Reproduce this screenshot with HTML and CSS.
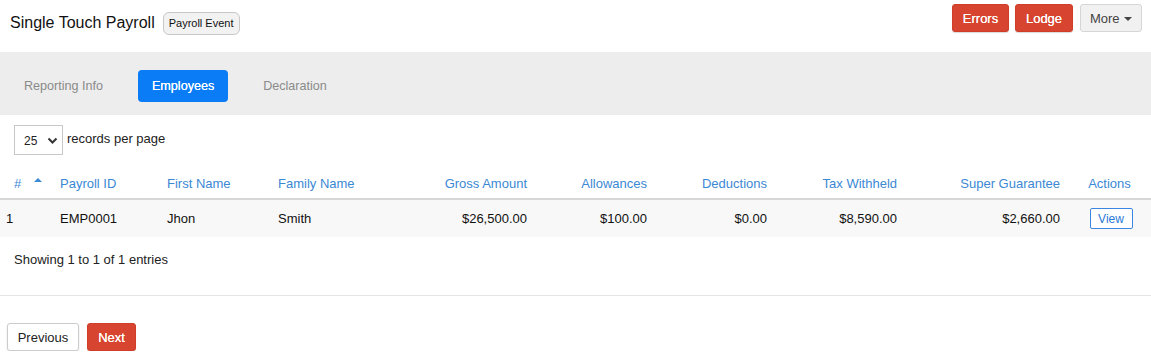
FILE: index.html
```html
<!DOCTYPE html>
<html>
<head>
<meta charset="utf-8">
<link rel="stylesheet" href="styles.css">
</head>
<body>
<div class="topbar">
  <div class="title-wrap">
    <span class="title">Single Touch Payroll</span>
    <span class="badge">Payroll Event</span>
  </div>
  <div class="actions">
    <button class="btn btn-red">Errors</button>
    <button class="btn btn-red">Lodge</button>
    <button class="btn btn-light">More <span class="caret"></span></button>
  </div>
</div>
<div class="tabs">
  <span class="tab">Reporting Info</span>
  <span class="tab active">Employees</span>
  <span class="tab">Declaration</span>
</div>
<div class="length">
  <div class="select"><span>25</span>
    <svg width="11" height="8" viewBox="0 0 11 8"><path d="M1.5 1.5 L5.5 5.5 L9.5 1.5" fill="none" stroke="#333" stroke-width="2"/></svg>
  </div>
  <span class="length-label">records per page</span>
</div>
<table class="grid">
  <colgroup>
    <col class="w52"><col class="w107"><col class="w111"><col class="w145"><col class="w120"><col class="w120"><col class="w120"><col class="w130"><col class="w163"><col class="w83">
  </colgroup>
  <thead>
    <tr>
      <th class="c-num">#<span class="sort"></span></th>
      <th>Payroll ID</th>
      <th>First Name</th>
      <th>Family Name</th>
      <th class="r">Gross Amount</th>
      <th class="r">Allowances</th>
      <th class="r">Deductions</th>
      <th class="r">Tax Withheld</th>
      <th class="r">Super Guarantee</th>
      <th class="c">Actions</th>
    </tr>
  </thead>
  <tbody>
    <tr>
      <td class="c-num">1</td>
      <td>EMP0001</td>
      <td>Jhon</td>
      <td>Smith</td>
      <td class="r">$26,500.00</td>
      <td class="r">$100.00</td>
      <td class="r">$0.00</td>
      <td class="r">$8,590.00</td>
      <td class="r">$2,660.00</td>
      <td class="c"><button class="view">View</button></td>
    </tr>
  </tbody>
</table>
<div class="info">Showing 1 to 1 of 1 entries</div>
<div class="footer">
  <button class="btn btn-white">Previous</button>
  <button class="btn btn-red">Next</button>
</div>
</body>
</html>
```
FILE: styles.css
```css
* { box-sizing: border-box; }
body {
  margin: 0;
  font-family: "Liberation Sans", Arial, sans-serif;
  font-size: 13px;
  color: #222;
  background: #fff;
}
.topbar {
  height: 52px;
  display: flex;
  justify-content: space-between;
  align-items: flex-start;
  padding: 0 9px 0 10px;
}
.title-wrap {
  display: flex;
  align-items: center;
  gap: 8px;
  padding-top: 12px;
}
.title { font-size: 16px; color: #111; margin-top: -1px; }
.badge {
  display: inline-block;
  height: 23px;
  line-height: 21px;
  padding: 0 5px;
  font-size: 11px;
  color: #111;
  background: #f2f2f2;
  border: 1px solid #c8c8c8;
  border-radius: 6px;
}
.actions {
  display: flex;
  gap: 6px;
  padding-top: 4px;
}
.btn {
  font-family: inherit;
  font-size: 13px;
  height: 28px;
  padding: 0 10px;
  border-radius: 3px;
  border: 1px solid transparent;
  cursor: pointer;
}
.btn-red {
  background: #d7442f;
  border-color: #d03d29;
  color: #fff;
  text-shadow: 0 0 0.4px #fff;
  box-shadow: 0 1px 1px rgba(0,0,0,0.15);
}
.actions .btn-red { width: 57px; padding: 0; }
.actions .btn-red + .btn-red { width: 58px; }
.btn-light {
  background: #f1f1f1;
  border-color: #d6d6d6;
  color: #444;
  width: 62px;
  padding: 0;
  margin-left: 1px;
}
.caret {
  display: inline-block;
  width: 0; height: 0;
  border-left: 4px solid transparent;
  border-right: 4px solid transparent;
  border-top: 4px solid #444;
  vertical-align: middle;
  margin-left: 1px;
}
.btn-white {
  background: #fff;
  border-color: #ccc;
  color: #222;
  box-shadow: 0 1px 2px rgba(0,0,0,0.12);
  width: 72px;
  padding: 0;
}
.footer .btn-red { width: 49px; padding: 0; }
.tabs {
  height: 63px;
  background: #ededed;
  display: flex;
  align-items: center;
  gap: 21px;
  padding-left: 10px;
  padding-top: 4px;
}
.tab {
  height: 32px;
  line-height: 32px;
  padding: 0 14px;
  color: #8a8a8a;
  border-radius: 4px;
  font-size: 12.6px;
}
.tab.active {
  background: #0a7cf6;
  color: #fff;
  width: 90px;
  text-align: center;
  padding: 0;
  text-shadow: 0 0 0.4px #fff;
}
.length {
  display: flex;
  align-items: center;
  gap: 4px;
  padding: 10px 14px 0 14px;
}
.select {
  width: 49px;
  height: 30px;
  border: 1px solid #c8c8c8;
  display: flex;
  align-items: center;
  justify-content: space-between;
  padding: 2px 4px 0 9px;
  font-size: 12px;
  color: #222;
}
.length-label { margin-top: -4px; }
.grid {
  width: 1151px;
  table-layout: fixed;
  border-collapse: collapse;
  margin-top: 10px;
}
.w52 { width: 52px; }
.w107 { width: 107px; }
.w111 { width: 111px; }
.w145 { width: 145px; }
.w120 { width: 120px; }
.w130 { width: 130px; }
.w163 { width: 163px; }
.w83 { width: 83px; }
.grid th {
  height: 34px;
  font-weight: normal;
  color: #3b88d4;
  text-align: left;
  padding: 3px 8px 0 8px;
  border-bottom: 2px solid #d6d6d6;
  vertical-align: middle;
  white-space: nowrap;
}
.grid td {
  height: 38px;
  padding: 0 8px;
  background: #f8f8f8;
  color: #111;
  white-space: nowrap;
}
.grid .r { text-align: right; }
.grid .c { text-align: center; }
.grid th.c-num { padding-left: 14px; position: relative; }
.grid td.c-num { padding-left: 6px; }
.sort {
  position: absolute;
  left: 34px;
  top: 13px;
  width: 0; height: 0;
  border-left: 4px solid transparent;
  border-right: 4px solid transparent;
  border-bottom: 4px solid #3b88d4;
}
.view {
  font-family: inherit;
  font-size: 12px;
  color: #2a78d8;
  background: #fff;
  border: 1px solid #3b86e0;
  border-radius: 2px;
  height: 21px;
  width: 43px;
  padding: 0;
  margin-left: 3px;
}
.info {
  padding: 15px 14px 0 14px;
  height: 58px;
}
.footer {
  border-top: 1px solid #e4e6e6;
  padding: 27px 7px 0 7px;
  display: flex;
  gap: 8px;
}
```
